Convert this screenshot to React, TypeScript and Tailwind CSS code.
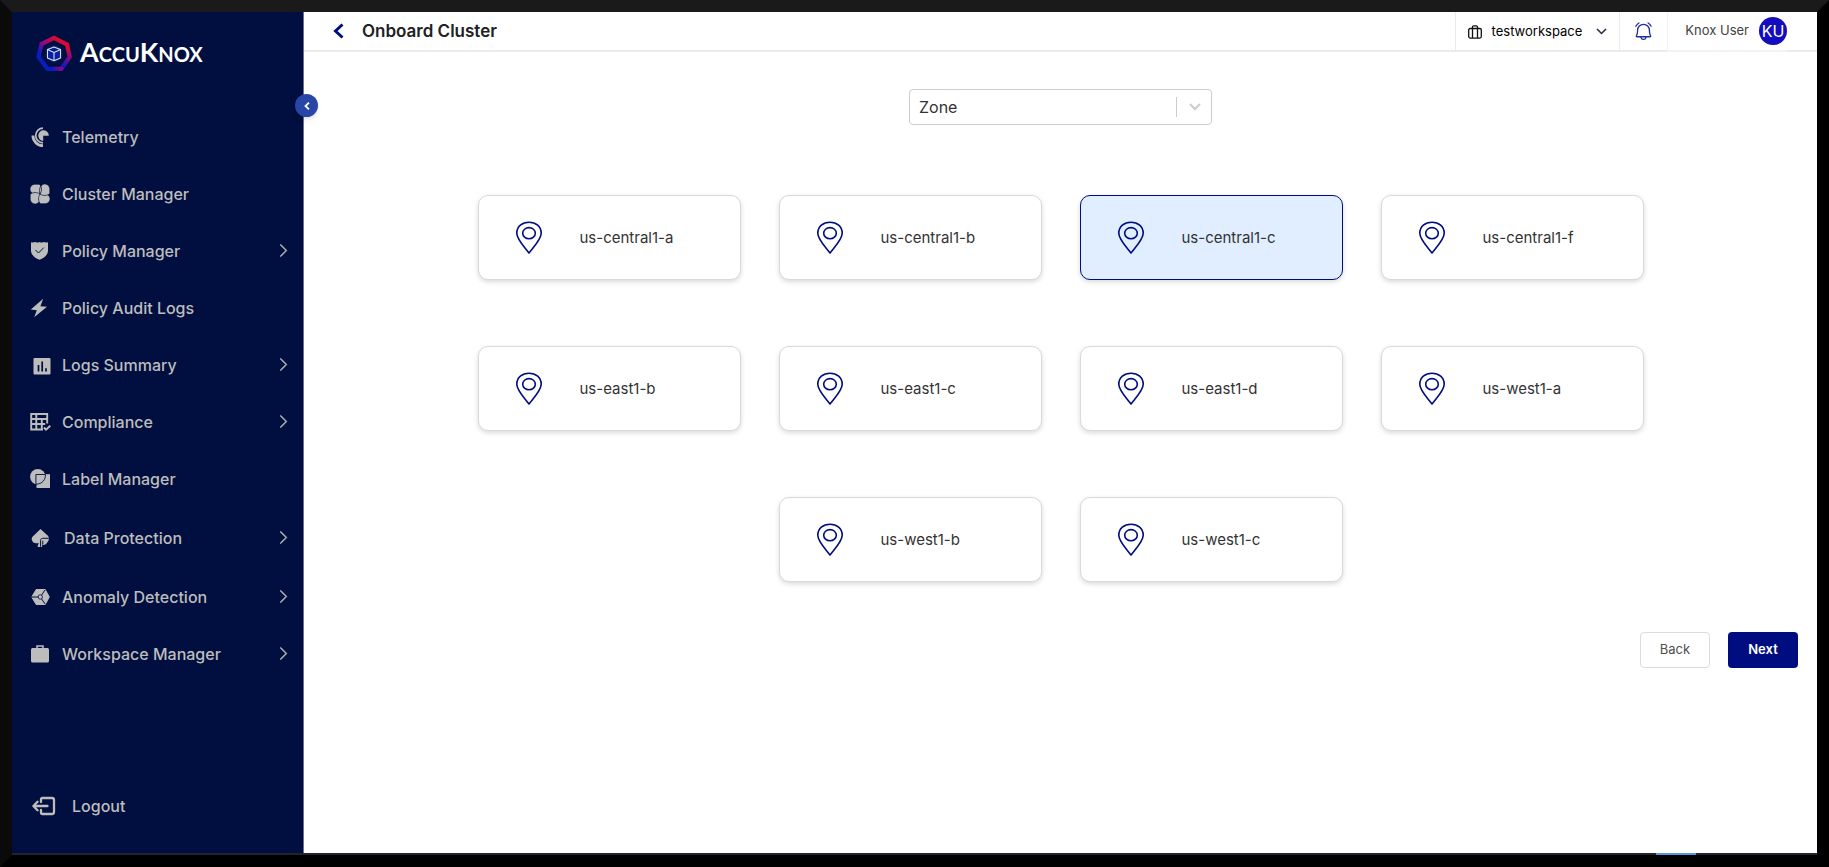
import type { ReactNode } from "react";
import { PiBellRinging } from "react-icons/pi";
import { BsChevronRight } from "react-icons/bs";

type NavItem = {
  label: string;
  icon: ReactNode;
  expandable?: boolean;
  roomy?: boolean;
};

function TelemetryIcon() {
  return (
    <svg width="20" height="20" viewBox="0 0 20 20" fill="none" stroke="currentColor" aria-hidden="true">
      <path fill="currentColor" stroke="none" d="M13.200 8.800V13.900A5.300 5.300 0 1 1 18.800 8.800z" />
      <path strokeWidth="1.700" d="M13 1.200A7.300 7.300 0 0 0 13 15.800" />
      <path strokeWidth="2.800" d="M2.900 8.500A10.100 10.100 0 0 0 13 18.600" />
    </svg>
  );
}

function ClusterIcon() {
  const petal = "M10 10C7.500 10.900 3 10.900 .9 8A4.900 4.900 0 0 1 4.600 .2H9.600C12 3 12 7 10 10z";
  return (
    <svg width="20" height="20" viewBox="0 0 20 20" fill="currentColor" stroke="#000f3f" strokeWidth="0.700" aria-hidden="true">
      <path d={petal} />
      <path d={petal} transform="rotate(270 10 10)" />
      <path d={petal} transform="rotate(180 10 10)" />
      <path d={petal} transform="rotate(90 10 10)" />
      <path fill="none" strokeWidth="0.800" d="M9.600 .2C12 3 12 7 10 10" />
    </svg>
  );
}

function ShieldIcon() {
  return (
    <svg width="20" height="20" viewBox="0 0 20 20" aria-hidden="true">
      <path fill="currentColor" d="M1 1.200c1.600.5 3.200.2 4.400-.2 1.500.7 2.800.7 4.100 0 1.300.7 2.600.7 4.100 0 1.200.4 2.800.7 4.400.2v8.300c0 4.500-3.900 7.500-8.500 9.300C4.900 17 1 14 1 9.500z" />
      <path fill="none" stroke="#000f3f" strokeWidth="1" d="m5.500 9 3 3 5.300-5.400" />
    </svg>
  );
}

function BoltIcon() {
  return (
    <svg width="20" height="20" viewBox="0 0 20 20" fill="currentColor" aria-hidden="true">
      <path d="M13.200.8.8 11.600l6 .7-2.600 7L17 8.700l-6.600-.4z" />
    </svg>
  );
}

function ChartIcon() {
  return (
    <svg className="shrink-0" width="21" height="20" viewBox="0 0 21 20" aria-hidden="true">
      <rect x="3.500" y="3" width="17" height="16.500" rx="1" fill="currentColor" />
      <path stroke="#000f3f" strokeWidth="1.700" d="M8.500 10v6.500M12.200 6.500v10M16 13.300v3.200" />
    </svg>
  );
}

function TableCheckIcon() {
  return (
    <svg className="shrink-0" width="21" height="20" viewBox="0 0 21 20" fill="none" stroke="currentColor" strokeWidth="1.900" aria-hidden="true">
      <path d="M13 17.500H1.200V2h16v9.500M1.200 7h16M1.200 12h14M6.300 2v15M11.800 7v10" />
      <path d="m14 15.500 2 2.200 4.300-4" />
    </svg>
  );
}

function LabelIcon() {
  return (
    <svg width="20" height="20" viewBox="0 0 20 20" aria-hidden="true">
      <path fill="currentColor" d="M6.500 5.200H20V19H6.500z" />
      <circle cx="7.800" cy="7.800" r="7.700" fill="currentColor" />
      <path fill="none" stroke="#000f3f" strokeWidth="0.9" d="M5.900 15.300V5.500h9.500c.4 4.800-2.900 9.700-9.500 9.700" />
    </svg>
  );
}

function SpadeIcon() {
  return (
    <svg width="20" height="20" viewBox="0 0 20 20" aria-hidden="true">
      <path fill="currentColor" d="m10.500 1 7.400 6.800c1.600 2 1.300 4.300 0 5.600-1.500 3-3.400 3.600-5.600 3.600L12 19H7.500l1.200-4.200C5.500 16.300 2.500 14.600 1.800 12c-.4-2 .4-3.200 2-4.600z" />
      <path fill="none" stroke="#000f3f" strokeWidth="1" d="M18.800 10.300h-6.200c-1.300 0-2 .8-2 2v6.500M12.800 12.700v4" />
    </svg>
  );
}

function HexagonIcon() {
  return (
    <svg width="20" height="20" viewBox="0 0 20 20" aria-hidden="true">
      <path fill="currentColor" stroke="currentColor" strokeLinejoin="round" d="M6.200 2.500h9L19.300 10l-4.100 7.500h-9L1.700 10z" />
      <path stroke="#000f3f" strokeWidth="1" d="M1 10h8M15 3l-4 6M15 17l-4-6" />
      <circle cx="10.300" cy="10" r="2.200" fill="currentColor" stroke="#000f3f" strokeWidth="0.800" />
    </svg>
  );
}

function BriefcaseIcon() {
  return (
    <svg width="20" height="20" viewBox="0 0 20 20" aria-hidden="true">
      <rect x="1" y="4" width="18" height="14.500" rx="1.500" fill="currentColor" />
      <path fill="none" stroke="currentColor" strokeWidth="1.500" d="M7 5V2h6v3" />
    </svg>
  );
}

function LogoutIcon() {
  return (
    <svg width="24" height="20" viewBox="0 0 24 20" fill="none" stroke="currentColor" strokeWidth="2.300" strokeLinecap="round" strokeLinejoin="round" aria-hidden="true">
      <path d="M9 6V3.500q0-1.500 1.500-1.500H20q2 0 2 2v12q0 2-2 2h-9.500Q9 18 9 16.500V14" />
      <path d="M15.500 10H1.500M5.500 5.800 1.400 10l4.100 4.200" />
    </svg>
  );
}

function SuitcaseIcon() {
  return (
    <svg width="14" height="14" viewBox="0 0 14 14" fill="none" stroke="#111111" strokeWidth="1.300" aria-hidden="true">
      <rect x=".7" y="3.500" width="12.600" height="9.600" rx="1.500" />
      <path d="M4.500 13V2q0-1.200 1.200-1.200h2.600q1.200 0 1.200 1.200v11" />
    </svg>
  );
}

function PinIcon() {
  return (
    <svg width="28" height="34" viewBox="0 0 28 34" fill="none" stroke="#000d80" strokeWidth="1.600" aria-hidden="true">
      <path strokeLinejoin="round" d="M14 32C10 26.500 1.800 18.500 1.800 12.200 1.800 5.500 7.200 1.200 14 1.200s12.200 4.300 12.200 11C26.200 18.500 18 26.500 14 32z" />
      <ellipse cx="14" cy="12.200" rx="6.300" ry="5.600" />
    </svg>
  );
}

function LogoMark() {
  return (
    <svg width="38" height="38" viewBox="0 0 38 38" fill="none" aria-hidden="true">
      <defs>
        <linearGradient id="ring" x1="5" y1="19" x2="22" y2="6" gradientUnits="userSpaceOnUse">
          <stop offset="0" stopColor="#0a1cc0" />
          <stop offset="0.300" stopColor="#7a0a90" />
          <stop offset="1" stopColor="#dc0a32" />
        </linearGradient>
        <linearGradient id="ringRight" x1="34" y1="12" x2="27" y2="33" gradientUnits="userSpaceOnUse">
          <stop offset="0.100" stopColor="#dc0a32" />
          <stop offset="0.550" stopColor="#7a0a90" />
          <stop offset="0.950" stopColor="#0a1cc0" />
        </linearGradient>
      </defs>
      <g strokeWidth="4.200" strokeLinejoin="round" strokeLinecap="round">
        <path stroke="url(#ringRight)" d="m32 10.500 2.700 12.500-8.200 11.800" />
        <path stroke="url(#ring)" d="M26.500 34.800h-14L3.500 23 6.500 10 19 3.800l13 6.700" />
      </g>
      <circle cx="19" cy="20" r="8.500" fill="#0a2a80" fillOpacity=".5" />
      <path fill="#0b1fa0" stroke="#d5e0ff" strokeWidth="1.100" strokeLinejoin="round" d="m19 13 6.500 2.600v8.300L19 26.700l-6.500-2.800v-8.300zM12.500 15.600l6.500 2.800 6.500-2.800M19 18.400v8.300" />
    </svg>
  );
}

const navItems: NavItem[] = [
  { label: "Telemetry", icon: <TelemetryIcon /> },
  { label: "Cluster Manager", icon: <ClusterIcon /> },
  { label: "Policy Manager", icon: <ShieldIcon />, expandable: true },
  { label: "Policy Audit Logs", icon: <BoltIcon /> },
  { label: "Logs Summary", icon: <ChartIcon />, expandable: true },
  { label: "Compliance", icon: <TableCheckIcon />, expandable: true },
  { label: "Label Manager", icon: <LabelIcon /> },
  { label: "Data Protection", icon: <SpadeIcon />, expandable: true, roomy: true },
  { label: "Anomaly Detection", icon: <HexagonIcon />, expandable: true },
  { label: "Workspace Manager", icon: <BriefcaseIcon />, expandable: true },
];

const zones = [
  "us-central1-a",
  "us-central1-b",
  "us-central1-c",
  "us-central1-f",
  "us-east1-b",
  "us-east1-c",
  "us-east1-d",
  "us-west1-a",
  "us-west1-b",
  "us-west1-c",
];
const selectedZone = "us-central1-c";

function Sidebar() {
  return (
    <aside className="relative flex w-[292px] shrink-0 flex-col border-r border-[#6f6a90] bg-[#000f3f] text-[#bdbdbd]">
      <a href="#home" aria-label="AccuKnox" className="flex h-24 items-start gap-[7px] pt-[22px] pl-[23px] text-white">
        <LogoMark />
        <span className="pt-1 font-['Lato'] text-[20px] leading-7 font-bold">
          <span className="text-[27px]">A</span>CCU<span className="text-[27px]">K</span>NOX
        </span>
      </a>
      <nav aria-label="Main">
        <ul>
          {navItems.map((item) => (
            <li key={item.label} className={item.roomy ? "h-[61px]" : "h-[57px]"}>
              <a
                href={"#" + item.label.toLowerCase().replaceAll(" ", "-")}
                className={"flex h-full items-center pr-3 pl-[18px] text-base font-medium " + (item.roomy ? "gap-[14px]" : "gap-3")}
              >
                <span className="flex w-5 shrink-0">{item.icon}</span>
                <span className="grow">{item.label}</span>
                {item.expandable && <BsChevronRight size={15} strokeWidth={0.6} aria-hidden="true" />}
              </a>
            </li>
          ))}
        </ul>
      </nav>
      <button type="button" className="mt-auto mb-[31px] flex h-8 items-center gap-4 pl-5 text-base font-medium">
        <LogoutIcon />
        Logout
      </button>
      <button
        type="button"
        aria-label="Collapse sidebar"
        className="absolute top-[82px] -right-[15px] flex size-[23px] items-center justify-center rounded-full bg-[#2845a8] text-white shadow-md"
      >
        <svg width="6" height="8" viewBox="0 0 6 8" fill="none" stroke="currentColor" strokeWidth="1.800" aria-hidden="true">
          <path d="M5 .7 1.500 4 5 7.300" />
        </svg>
      </button>
    </aside>
  );
}

function Header() {
  return (
    <header className="flex h-10 items-stretch text-[13px]">
      <div className="flex grow items-center gap-[18px] border-b-2 border-[#ebebeb] pl-[29px]">
        <button type="button" aria-label="Go back" className="text-[#000d80]">
          <svg width="11" height="16" viewBox="0 0 11 16" fill="none" stroke="currentColor" strokeWidth="3" aria-hidden="true">
            <path d="M9.500 1.500 2.500 8l7 6.500" />
          </svg>
        </button>
        <h1 className="text-[17px] leading-6 font-semibold text-[#212121]">Onboard Cluster</h1>
      </div>
      <button type="button" className="flex items-center border-b-2 border-l border-[#ebebeb] px-3 pt-px text-black">
        <SuitcaseIcon />
        <span className="ml-[10px]">testworkspace</span>
        <svg className="ml-[14px]" width="11" height="7" viewBox="0 0 11 7" fill="none" stroke="#1c2b46" strokeWidth="1.500" aria-hidden="true">
          <path d="m1 1 4.500 4.500L10 1" />
        </svg>
      </button>
      <button type="button" aria-label="Notifications" className="flex w-12 items-center justify-center border-b-2 border-l border-[#ebebeb] text-[#1f2f98]">
        <PiBellRinging size={21} aria-hidden="true" />
      </button>
      <button type="button" className="flex items-center gap-[10px] border-b-2 border-l border-[#f3f3f3] pl-[17px] text-[#424242]">
        Knox User
        <span className="flex size-7 items-center justify-center rounded-full bg-[#130dbd] text-base text-white">KU</span>
      </button>
      <div className="w-[30px] border-b-2 border-[#ebebeb]" />
    </header>
  );
}

function ZoneCard({ name, selected }: { name: string; selected: boolean }) {
  return (
    <button
      type="button"
      aria-pressed={selected}
      className={
        "flex h-[85px] w-[263px] items-center gap-[37px] rounded-[10px] border pt-px pl-9 text-[15px] text-[#333333] shadow-[0_2px_5px_rgba(0,0,0,0.15)] " +
        (selected ? "border-[#000d80] bg-[#e0eeff]" : "border-[#d9d9d9] bg-white")
      }
    >
      <PinIcon />
      {name}
    </button>
  );
}

export default function App() {
  return (
    <div className="flex min-h-screen flex-col border-[12px] border-t-[#1a1a1a] border-r-black border-b-black border-l-[#0a0a0a] bg-white font-['Inter',sans-serif]">
      <div className="flex grow">
        <Sidebar />
        <div className="flex grow flex-col">
          <Header />
          <main className="flex flex-col">
            <div className="relative mx-auto mt-[37px] w-[303px]">
              <select
                aria-label="Zone"
                className="h-9 w-full appearance-none rounded border border-[#cccccc] bg-white px-[9px] text-base text-[#333333]"
              >
                <option>Zone</option>
              </select>
              <span className="pointer-events-none absolute inset-y-2 right-0 flex w-9 items-center justify-center border-l border-[#cccccc] text-[#cccccc]">
                <svg width="12" height="8" viewBox="0 0 12 8" fill="none" stroke="currentColor" strokeWidth="2" aria-hidden="true">
                  <path d="m1 1 5 5 5-5" />
                </svg>
              </span>
            </div>
            <div className="mx-auto mt-[70px] flex max-w-[1200px] flex-wrap justify-center gap-x-[38px] gap-y-[66px]">
              {zones.map((zone) => (
                <ZoneCard key={zone} name={zone} selected={zone === selectedZone} />
              ))}
            </div>
            <div className="mt-[50px] flex justify-end gap-[18px] pr-[19px] text-[13px]">
              <button type="button" className="h-9 w-[70px] rounded border border-[#dcdcdc] text-[#4f4f4f]">
                Back
              </button>
              <button type="button" className="h-9 w-[70px] rounded bg-[#000d80] font-semibold text-white">
                Next
              </button>
            </div>
          </main>
        </div>
      </div>
      <div className="flex h-[2px] justify-end bg-[#1f2430] pr-[121px]">
        <span className="w-10 bg-[#5b93dc]" />
      </div>
    </div>
  );
}
